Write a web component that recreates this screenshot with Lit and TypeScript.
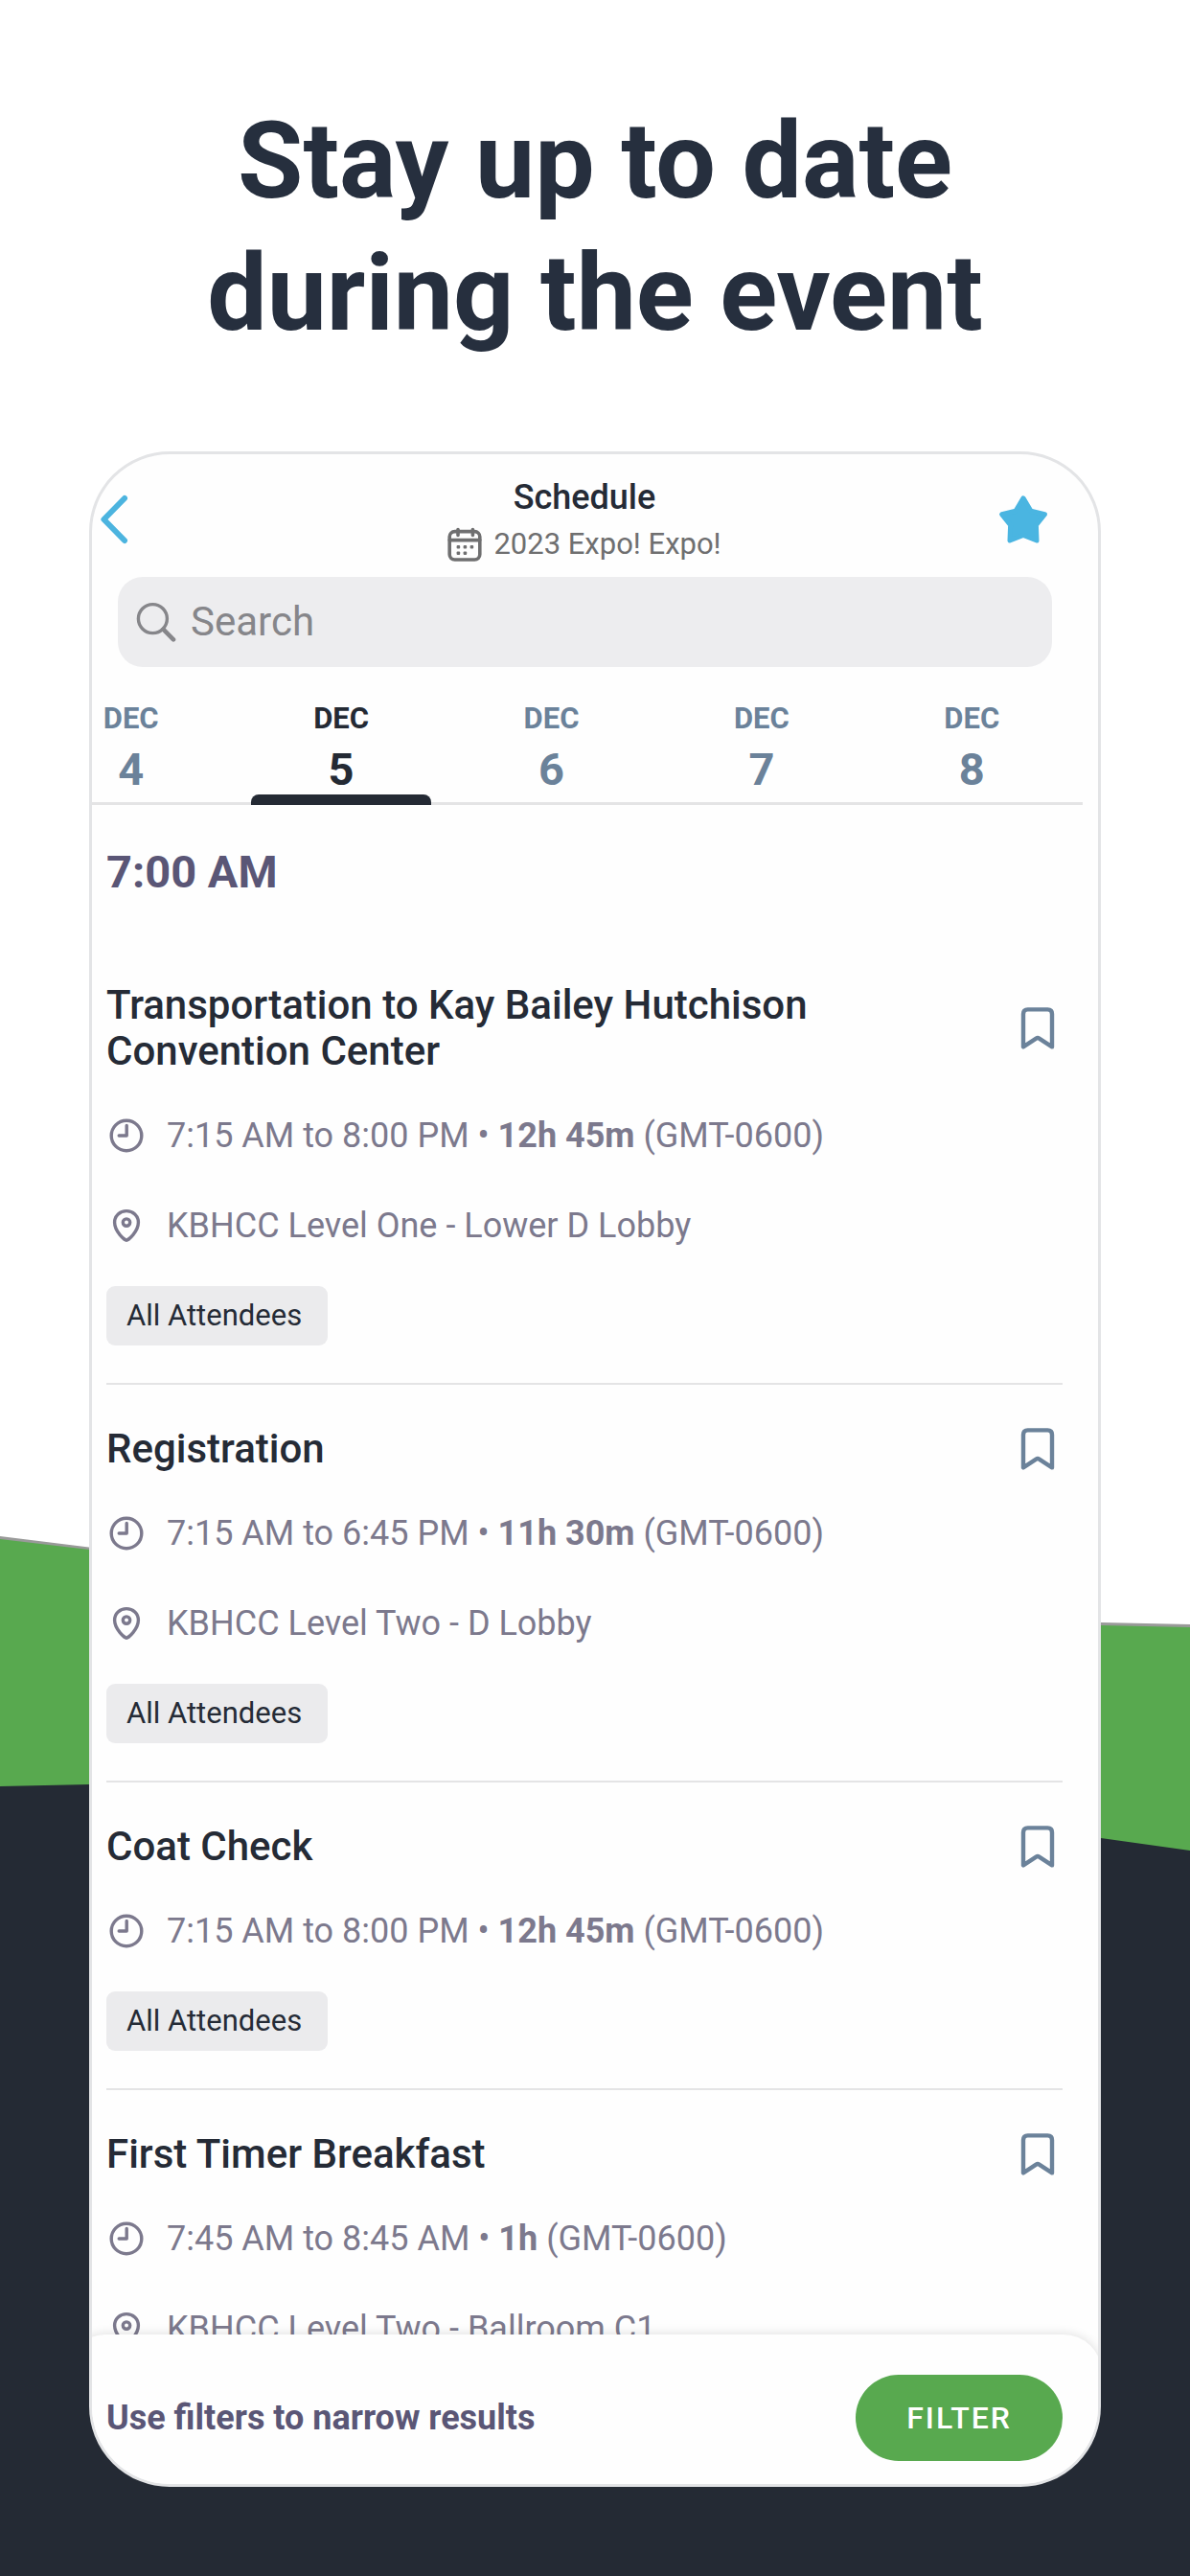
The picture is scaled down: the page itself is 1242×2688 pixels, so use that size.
import { LitElement, html, css, svg, nothing } from "lit";
import { customElement, property, state } from "lit/decorators.js";
import { classMap } from "lit/directives/class-map.js";

interface Session {
  title: string;
  time: string;
  duration: string;
  zone: string;
  place?: string;
  tag?: string;
}

const SESSIONS: Session[] = [
  {
    title: "Transportation to Kay Bailey Hutchison Convention Center",
    time: "7:15 AM to 8:00 PM",
    duration: "12h 45m",
    zone: "(GMT-0600)",
    place: "KBHCC Level One - Lower D Lobby",
    tag: "All Attendees",
  },
  {
    title: "Registration",
    time: "7:15 AM to 6:45 PM",
    duration: "11h 30m",
    zone: "(GMT-0600)",
    place: "KBHCC Level Two - D Lobby",
    tag: "All Attendees",
  },
  {
    title: "Coat Check",
    time: "7:15 AM to 8:00 PM",
    duration: "12h 45m",
    zone: "(GMT-0600)",
    tag: "All Attendees",
  },
  {
    title: "First Timer Breakfast",
    time: "7:45 AM to 8:45 AM",
    duration: "1h",
    zone: "(GMT-0600)",
    place: "KBHCC Level Two - Ballroom C1",
  },
];

const DAYS = [4, 5, 6, 7, 8];

const clockIcon = html`<svg class="icon" viewBox="0 0 42 42" aria-hidden="true">
  ${svg`<circle cx="21" cy="21" r="15.8" /><path d="M21.2 10.5V21H13.2" />`}
</svg>`;

const pinIcon = html`<svg class="icon" viewBox="0 0 42 42" aria-hidden="true">
  ${svg`<path d="M21 36.2C19.4 36.2 8.6 27.4 8.6 17.6C8.6 10.4 14.2 5.6 21 5.6S33.4 10.4 33.4 17.6C33.4 27.4 22.6 36.2 21 36.2Z" /><circle cx="21" cy="17.6" r="3.7" />`}
</svg>`;

@customElement("session-card")
export class SessionCard extends LitElement {
  @property({ attribute: false }) session!: Session;
  @state() private saved = false;

  static styles = css`
    :host {
      display: block;
      border-bottom: 2px solid #e4e4e5;
      padding: 43px 0 39px;
    }
    .head {
      display: flex;
      align-items: center;
      justify-content: space-between;
      gap: 40px;
      margin-bottom: 43px;
    }
    .title {
      margin: 0;
      font-size: 42px;
      line-height: 48px;
      font-weight: 500;
      color: #252b36;
    }
    .save {
      flex: none;
      display: flex;
      margin: 0 8px 0 24px;
      padding: 0;
      border: 0;
      background: none;
      cursor: pointer;
    }
    .bookmark {
      width: 36px;
      height: 44px;
      fill: none;
      stroke: #6b829a;
      stroke-width: 4.4;
      stroke-linejoin: round;
    }
    .bookmark.saved {
      fill: #6b829a;
    }
    .row {
      display: flex;
      align-items: center;
      gap: 21px;
      font-size: 36px;
      line-height: 42px;
      color: #7c798d;
    }
    .row + .row {
      margin-top: 52px;
    }
    .icon {
      flex: none;
      width: 42px;
      height: 42px;
      fill: none;
      stroke: currentColor;
      stroke-width: 3.4;
      stroke-linecap: round;
      stroke-linejoin: round;
    }
    .duration {
      font-weight: 700;
    }
    .tag {
      display: block;
      width: fit-content;
      margin-top: 42px;
      padding: 13px 27px 13px 21px;
      border-radius: 9px;
      background: #ebebed;
      font-size: 31px;
      line-height: 36px;
      color: #252b36;
    }
  `;

  render() {
    const s = this.session;
    return html`
      <div class="head">
        <h3 class="title">${s.title}</h3>
        <button
          class="save"
          aria-label="Bookmark ${s.title}"
          aria-pressed=${this.saved}
          @click=${() => (this.saved = !this.saved)}
        >
          <svg class=${classMap({ bookmark: true, saved: this.saved })} viewBox="0 0 36 44" aria-hidden="true">
            <path d="M3 41.4V7C3 4 4.6 2.4 7.6 2.4H28.4C31.4 2.4 33 4 33 7V41.4L19.6 32.6Q18 31.6 16.4 32.6Z" />
          </svg>
        </button>
      </div>
      <div class="row">
        ${clockIcon}
        <span>${s.time} • <span class="duration">${s.duration}</span> ${s.zone}</span>
      </div>
      ${s.place ? html`<div class="row">${pinIcon}<span>${s.place}</span></div>` : nothing}
      ${s.tag ? html`<span class="tag">${s.tag}</span>` : nothing}
    `;
  }
}

@customElement("app-root")
export class AppRoot extends LitElement {
  @state() private day = 5;

  static styles = css`
    :host {
      display: block;
      font-family: Roboto, "Liberation Sans", sans-serif;
    }
    .page {
      position: relative;
      box-sizing: border-box;
      height: 100vh;
      min-height: 1200px;
      display: flex;
      flex-direction: column;
      padding: 99px 93px 93px;
      background: #fff;
      overflow: hidden;
    }
    .backdrop {
      position: absolute;
      inset: 0;
      width: 100%;
      height: 100%;
    }
    .hero {
      position: relative;
      margin: 0 0 96px;
      font-size: 111px;
      line-height: 138px;
      font-weight: 700;
      text-align: center;
      color: #262f3e;
    }
    .line {
      display: block;
    }
    .phone {
      position: relative;
      flex: 1;
      min-height: 0;
      display: flex;
      flex-direction: column;
      border: 3px solid #e3e4e6;
      border-radius: 84px;
      background: #fefefe;
      overflow: hidden;
    }
    .bar {
      display: grid;
      grid-template-columns: 1fr auto 1fr;
      align-items: center;
      padding: 24px 30px 16px 8px;
    }
    .plain {
      display: flex;
      padding: 0;
      border: 0;
      background: none;
      cursor: pointer;
    }
    .fav {
      justify-self: end;
      margin-right: 22px;
    }
    .chevron {
      width: 30px;
      height: 52px;
      fill: none;
      stroke: #4cb4df;
      stroke-width: 6;
      stroke-linecap: round;
      stroke-linejoin: round;
    }
    .star {
      width: 52px;
      height: 52px;
      fill: #4ab5e1;
      stroke: #4ab5e1;
      stroke-width: 5;
      stroke-linejoin: round;
    }
    .heading {
      display: flex;
      flex-direction: column;
      align-items: center;
      gap: 10px;
    }
    .name {
      margin: 0;
      font-size: 36px;
      line-height: 42px;
      font-weight: 500;
      color: #252b36;
    }
    .event {
      display: flex;
      align-items: center;
      gap: 12px;
      font-size: 31px;
      line-height: 36px;
      color: #6f6f70;
    }
    .calendar {
      width: 36px;
      height: 36px;
      fill: none;
      stroke: currentColor;
      stroke-width: 3.6;
      stroke-linecap: round;
    }
    .dots {
      fill: currentColor;
      stroke: none;
    }
    .search {
      display: flex;
      align-items: center;
      gap: 15px;
      height: 94px;
      margin: 0 48px 0 27px;
      padding: 0 19px;
      border-radius: 26px;
      background: #ededef;
    }
    .glass {
      flex: none;
      width: 42px;
      height: 42px;
      fill: none;
      stroke: #86868a;
      stroke-width: 3.4;
      stroke-linecap: round;
    }
    .field {
      flex: 1;
      min-width: 0;
      padding: 0;
      border: 0;
      outline: 0;
      background: none;
      font: inherit;
      font-size: 42px;
      line-height: 50px;
      color: #252b36;
    }
    .field::placeholder {
      color: #86868a;
      opacity: 1;
    }
    .days {
      margin-right: 16px;
      overflow: hidden;
      box-shadow: inset 0 -3px #e4e4e5;
    }
    .strip {
      display: grid;
      grid-template-columns: repeat(5, 1fr);
      margin: 0 6px 0 -69px;
    }
    .day {
      display: flex;
      flex-direction: column;
      align-items: center;
      padding: 36px 0 0;
      border: 0;
      background: none;
      font: inherit;
      color: #6b829a;
      cursor: pointer;
    }
    .month {
      margin-bottom: 8px;
      font-size: 31px;
      line-height: 36px;
      font-weight: 700;
    }
    .date {
      font-size: 47px;
      line-height: 53px;
      font-weight: 700;
    }
    .mark {
      width: 188px;
      height: 11px;
      border-radius: 8px 8px 0 0;
    }
    .current {
      color: #242a34;
    }
    .current .mark {
      background: #242a34;
    }
    .list {
      flex: 1;
      min-height: 0;
      padding: 43px 37px 0 15px;
      overflow: hidden;
    }
    .hour {
      margin: 0 0 45px;
      font-size: 47px;
      line-height: 54px;
      font-weight: 700;
      color: #5a5676;
    }
    .footer {
      position: relative;
      display: flex;
      align-items: center;
      justify-content: space-between;
      margin: -40px -4px 0 -26px;
      padding: 42px 41px 24px 41px;
      border-radius: 40px 40px 0 0;
      background: #fefefe;
      box-shadow: 0 0 12px rgba(0, 0, 0, 0.14);
    }
    .hint {
      font-size: 36px;
      line-height: 42px;
      font-weight: 700;
      color: #5a5676;
    }
    .filter {
      padding: 26px 53px;
      border: 0;
      border-radius: 45px;
      background: #58a94f;
      font: inherit;
      font-size: 32px;
      line-height: 38px;
      font-weight: 500;
      letter-spacing: 2px;
      color: #fff;
      cursor: pointer;
    }
  `;

  render() {
    return html`
      <main class="page">
        <svg class="backdrop" viewBox="0 0 1242 2688" preserveAspectRatio="none" aria-hidden="true">
          <path fill="#999a99" d="M0 1603L621 1680L1149 1693L1242 1695V2000H0Z" />
          <path fill="#58a94f" d="M0 1606L93 1617L621 1683L1149 1696L1242 1698V2000H0Z" />
          <path fill="#242a34" d="M0 1864L93 1862L621 1850L1149 1918L1242 1931V2688H0Z" />
        </svg>
        <h1 class="hero">
          <span class="line">Stay up to date</span>
          <span class="line">during the event</span>
        </h1>
        <section class="phone">
          <header class="bar">
            <button class="plain" aria-label="Back">
              <svg class="chevron" viewBox="0 0 30 52" aria-hidden="true">
                <path d="M26 4L4.4 26L26 48" />
              </svg>
            </button>
            <div class="heading">
              <h2 class="name">Schedule</h2>
              <div class="event">
                <svg class="calendar" viewBox="0 0 36 36" aria-hidden="true">
                  <rect x="2.2" y="4.6" width="31.6" height="29.4" rx="5.5" />
                  <path d="M2.2 13.6H33.8M11 2.6V8.4M26.4 2.6V8.4" />
                  <g class="dots">
                    <rect x="9.6" y="19" width="3.6" height="3.6" rx="1" />
                    <rect x="16.6" y="19" width="3.6" height="3.6" rx="1" />
                    <rect x="23.6" y="19" width="3.6" height="3.6" rx="1" />
                    <rect x="9.6" y="25.4" width="3.6" height="3.6" rx="1" />
                    <rect x="16.6" y="25.4" width="3.6" height="3.6" rx="1" />
                  </g>
                </svg>
                <span>2023 Expo! Expo!</span>
              </div>
            </div>
            <button class="plain fav" aria-label="Favorites">
              <svg class="star" viewBox="0 0 52 52" aria-hidden="true">
                <path
                  d="M26 3.8L34 17.2L48.4 20.8L39.4 32L40 48L26 42.4L12 48L12.6 32L3.6 20.8L18 17.2Z"
                />
              </svg>
            </button>
          </header>
          <label class="search">
            <svg class="glass" viewBox="0 0 42 42" aria-hidden="true">
              <circle cx="17.4" cy="17.6" r="15" />
              <path d="M28.4 28.6L39 39.4" stroke-width="4.6" />
            </svg>
            <input class="field" type="text" placeholder="Search" aria-label="Search" />
          </label>
          <nav class="days" aria-label="Days">
            <div class="strip">
              ${DAYS.map(
                (d) => html`<button
                  class=${classMap({ day: true, current: d === this.day })}
                  aria-pressed=${d === this.day}
                  @click=${() => (this.day = d)}
                >
                  <span class="month">DEC</span>
                  <span class="date">${d}</span>
                  <span class="mark"></span>
                </button>`
              )}
            </div>
          </nav>
          <div class="list">
            <h2 class="hour">7:00 AM</h2>
            ${SESSIONS.map((s) => html`<session-card .session=${s}></session-card>`)}
          </div>
          <footer class="footer">
            <span class="hint">Use filters to narrow results</span>
            <button class="filter">FILTER</button>
          </footer>
        </section>
      </main>
    `;
  }
}
